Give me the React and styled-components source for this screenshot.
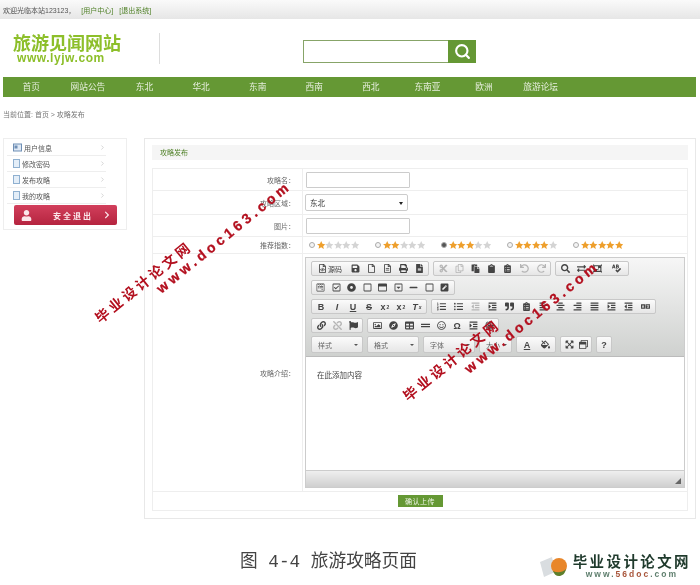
import React from 'react';
import styled, { createGlobalStyle } from 'styled-components';
import {
  FaSave, FaRegFile, FaRegFileAlt, FaPrint, FaFileAlt, FaCut, FaRegCopy, FaPaste, FaClipboard, FaClipboardList,
  FaUndo, FaRedo, FaSearch, FaExchangeAlt, FaObjectGroup, FaSpellCheck, FaWpforms, FaRegCheckSquare, FaDotCircle,
  FaRegWindowMaximize, FaRegCaretSquareDown, FaMinus, FaRegSquare, FaPenSquare, FaListOl, FaListUl, FaOutdent,
  FaIndent, FaQuoteRight, FaAlignLeft, FaAlignCenter, FaAlignRight, FaAlignJustify, FaLink, FaUnlink, FaFlag,
  FaRegImage, FaCompass, FaTable, FaGripLines, FaRegSmile, FaGlobe, FaExpandArrowsAlt, FaRegWindowRestore,
  FaLanguage, FaUser, FaChevronRight, FaRegFileCode, FaFillDrip,
} from 'react-icons/fa';
import { Search, ChevronRight } from 'lucide-react';

const cjk = '"Liberation Sans", "Noto Sans CJK SC", sans-serif';

const GlobalStyle = createGlobalStyle`
  html, body { margin: 0; padding: 0; background: #fff; }
  * { box-sizing: border-box; }
`;

const Page = styled.div`
  position: relative;
  width: 700px;
  height: 585px;
  overflow: hidden;
  font-family: ${cjk};
  font-size: 7px;
  color: #555;
  filter: blur(0.3px);
`;

const TopBar = styled.div`
  height: 19px;
  padding: 0 3px;
  display: flex;
  align-items: center;
  gap: 6px;
  background: linear-gradient(#fafafa, #e6e6e6);
`;

const TopLink = styled.a`
  color: #4d7f24;
`;

const Header = styled.header`
  height: 58px;
  padding: 14px 0 0 13px;
  display: flex;
  align-items: flex-start;
`;

const Logo = styled.div`
  width: 146px;
  height: 31px;
  margin-top: 2px;
  color: #8dbf2a;
  font-weight: 700;
  h1 {
    margin: 0;
    font-size: 18px;
    line-height: 18px;
    color: #8dbf2a;
  }
  span {
    display: block;
    margin-left: 4px;
    font-size: 12px;
    line-height: 10px;
    letter-spacing: 0.55px;
  }
`;

const HeaderDivider = styled.div`
  width: 1px;
  height: 31px;
  background: #ddd;
`;

const SearchBox = styled.div`
  margin: 7px 0 0 143px;
  display: flex;
  height: 23px;
`;

const SearchInput = styled.div`
  width: 145px;
  border: 1px solid #87a468;
  border-right: 0;
`;

const SearchButton = styled.button`
  width: 28px;
  padding: 0;
  border: 0;
  background: #659834;
  color: #fff;
  display: flex;
  align-items: center;
  justify-content: center;
`;

const Nav = styled.nav`
  margin: 0 4px 0 3px;
  height: 20px;
  display: flex;
  background: #659834;
`;

const NavItem = styled.a`
  width: 56.6px;
  text-align: center;
  line-height: 20px;
  font-size: 8.7px;
  color: #e6eedd;
`;

const Breadcrumb = styled.div`
  padding: 13px 3px 0;
  height: 41px;
  color: #777;
  line-height: 9px;
`;

const Content = styled.div`
  display: flex;
  align-items: flex-start;
  gap: 17px;
  padding: 0 4px 0 3px;
`;

const Sidebar = styled.aside`
  width: 124px;
  height: 92px;
  padding: 1px 3px 0;
  border: 1px solid #eee;
`;

const SideRow = styled.div`
  height: 16px;
  width: 99px;
  padding-left: 6px;
  display: flex;
  align-items: center;
  gap: 2px;
  border-bottom: 1px solid #eee;
  color: #555;
  svg:last-child {
    margin-left: auto;
    color: #bbb;
  }
`;

const LogoutButton = styled.button`
  margin: 1px 0 0 7px;
  width: 103px;
  height: 20px;
  padding: 0 6px 0 7px;
  display: flex;
  align-items: center;
  border: 0;
  border-radius: 2px;
  background: linear-gradient(#d23f5c, #b5243f);
  color: #fbe6ea;
  font-family: ${cjk};
  font-size: 8px;
  font-weight: 700;
  letter-spacing: 2px;
  span {
    margin-left: 21px;
  }
  svg:last-child {
    margin-left: auto;
  }
`;

const Main = styled.main`
  width: 552px;
  height: 381px;
  padding: 6px 7px;
  border: 1px solid #e8e8e8;
`;

const PanelTitle = styled.div`
  height: 15px;
  margin-bottom: 8px;
  padding-left: 8px;
  background: #f5f5f5;
  color: #4d7f24;
  line-height: 15px;
`;

const FormTable = styled.div`
  border: 1px solid #eee;
  border-bottom: 0;
`;

const FormRow = styled.div`
  height: ${(p) => p.$height}px;
  display: flex;
  border-bottom: 1px solid #eee;
`;

const Label = styled.div`
  width: 150px;
  padding-right: 7px;
  border-right: 1px solid #eee;
  display: flex;
  align-items: center;
  justify-content: flex-end;
  color: #666;
`;

const Field = styled.div`
  flex: 1;
  padding-left: 3px;
  display: flex;
  align-items: center;
`;

const TextInput = styled.div`
  width: 104px;
  height: 16px;
  border: 1px solid #ccc;
  border-radius: 1px;
`;

const Select = styled.div`
  width: 103px;
  height: 17px;
  margin-left: -1px;
  padding: 0 4px;
  display: flex;
  align-items: center;
  justify-content: space-between;
  border: 1px solid #ccc;
  border-radius: 2px;
  color: #333;
  font-size: 7.5px;
  &::after {
    content: '';
    border: 2px solid transparent;
    border-top: 3px solid #222;
    margin-top: 3px;
  }
`;

const Ratings = styled.div`
  display: flex;
  gap: 6px;
`;

const Rating = styled.div`
  width: 60px;
  display: flex;
  align-items: center;
  padding-left: 3px;
`;

const Radio = styled.span`
  width: 6px;
  height: 6px;
  margin-right: 2px;
  border-radius: 50%;
  border: 1px solid #aaa;
  background: ${(p) => (p.$checked ? '#555' : '#f4f4f4')};
`;

const Editor = styled.div`
  width: 380px;
  height: 231px;
  margin-left: -1px;
  border: 1px solid #ccc;
  display: flex;
  flex-direction: column;
`;

const Toolbar = styled.div`
  height: 99px;
  padding: 3px 4px 0 5px;
  display: flex;
  flex-direction: column;
  gap: 4px;
  border-bottom: 1px solid #bbb;
  background: linear-gradient(#f6f6f6, #cfd1cf);
`;

const ToolRow = styled.div`
  height: 15px;
  display: flex;
  gap: 4px;
`;

const ToolGroup = styled.div`
  display: flex;
  align-items: center;
  padding: 0 1px;
  border: 1px solid #c8c8c8;
  border-radius: 2px;
  background: linear-gradient(#fbfbfb, #e6e6e6);
`;

const ToolButton = styled.span`
  width: ${(p) => p.$width || 16}px;
  flex: none;
  display: flex;
  align-items: center;
  justify-content: center;
  gap: 1px;
  color: ${(p) => (p.$off ? '#b5b5b5' : '#444')};
  font-size: ${(p) => (p.$text ? 9 : 7)}px;
  font-weight: ${(p) => (p.$text ? 700 : 400)};
  font-style: ${(p) => (p.$italic ? 'italic' : 'normal')};
  text-decoration: ${(p) => p.$deco || 'none'};
  sub, sup { font-size: 5px; line-height: 0; }
`;

const ComboRow = styled(ToolRow)`
  height: 17px;
  margin-top: -1px;
`;

const Combo = styled.div`
  width: ${(p) => p.$width}px;
  padding: 0 4px 0 6px;
  display: flex;
  align-items: center;
  justify-content: space-between;
  border: 1px solid #c8c8c8;
  border-radius: 2px;
  background: linear-gradient(#fbfbfb, #e6e6e6);
  color: #666;
  &::after {
    content: '';
    border: 2px solid transparent;
    border-top: 2px solid #555;
    margin-top: 2px;
  }
`;

const EditArea = styled.div`
  flex: 1;
  padding: 12px 11px;
  background: #fff;
  color: #444;
  font-size: 7.5px;
`;

const EditorFooter = styled.div`
  height: 17px;
  position: relative;
  border-top: 1px solid #ccc;
  background: linear-gradient(#efefef, #cfcfcf);
  &::after {
    content: '';
    position: absolute;
    right: 3px;
    bottom: 3px;
    border: 3px solid transparent;
    border-right-color: #666;
    border-bottom-color: #666;
  }
`;

const SubmitRow = styled.div`
  height: 19px;
  display: flex;
  justify-content: center;
  align-items: center;
  border-bottom: 1px solid #eee;
`;

const SubmitButton = styled.button`
  width: 45px;
  height: 12px;
  padding: 0;
  border: 0;
  background: #659834;
  color: #eef5e6;
  font-family: ${cjk};
  font-size: 7px;
  letter-spacing: 0.5px;
`;

const Footer = styled.footer`
  position: absolute;
  left: 0;
  right: 0;
  bottom: 7px;
  height: 28px;
  padding: 0 9px 0 240px;
  display: flex;
  justify-content: space-between;
`;

const Caption = styled.div`
  align-self: flex-start;
  font-family: "Liberation Mono", "Noto Sans CJK SC", monospace;
  font-size: 17.7px;
  line-height: 24px;
  color: #444;
  white-space: pre;
`;

const Brand = styled.div`
  align-self: flex-end;
  display: flex;
  align-items: center;
  gap: 4px;
`;

const BrandText = styled.div`
  text-align: center;
  strong {
    display: block;
    font-size: 14.5px;
    line-height: 15px;
    letter-spacing: 2.4px;
    color: #1f3a2c;
  }
  span {
    display: block;
    font-family: "Liberation Sans", sans-serif;
    font-size: 8.5px;
    line-height: 8px;
    font-weight: 700;
    letter-spacing: 2px;
    color: #5f7f6e;
  }
  em {
    font-style: normal;
    color: #a8553a;
  }
`;

const Watermark = styled.div`
  position: absolute;
  left: ${(p) => p.$x}px;
  top: ${(p) => p.$y}px;
  transform: rotate(-39deg);
  transform-origin: 0 50%;
  white-space: nowrap;
  color: #b3101f;
  font-weight: 700;
  font-size: ${(p) => p.$size}px;
  line-height: 16px;
  letter-spacing: ${(p) => p.$spacing}px;
  -webkit-text-stroke: ${(p) => p.$stroke || 0}px #b3101f;
`;

const navItems = ['首页', '网站公告', '东北', '华北', '东南', '西南', '西北', '东南亚', '欧洲', '旅游论坛'];
const sideItems = ['用户信息', '修改密码', '发布攻略', '我的攻略'];

const toolbars = [
  [
    [
      { icon: FaRegFileCode, label: '源码', width: 34 }, { icon: FaSave }, { icon: FaRegFile }, { icon: FaRegFileAlt },
      { icon: FaPrint }, { icon: FaFileAlt },
    ],
    [
      { icon: FaCut, off: true }, { icon: FaRegCopy, off: true }, { icon: FaPaste }, { icon: FaClipboard },
      { icon: FaClipboardList }, { icon: FaUndo, off: true, width: 18 }, { icon: FaRedo, off: true },
    ],
    [{ icon: FaSearch }, { icon: FaExchangeAlt }, { icon: FaObjectGroup }, { icon: FaSpellCheck, width: 22 }],
  ],
  [
    [
      { icon: FaWpforms, width: 15.5 }, { icon: FaRegCheckSquare, width: 15.5 }, { icon: FaDotCircle, width: 15.5 },
      { icon: FaRegSquare, width: 15.5 }, { icon: FaRegWindowMaximize, width: 15.5 },
      { icon: FaRegCaretSquareDown, width: 15.5 }, { icon: FaMinus, width: 15.5 }, { icon: FaRegSquare, width: 15.5 },
      { icon: FaPenSquare, width: 15.5 },
    ],
  ],
  [
    [
      { text: 'B' }, { text: 'I', italic: true }, { text: 'U', deco: 'underline' }, { text: 'S', deco: 'line-through' },
      { text: 'x', sub: '2' }, { text: 'x', sup: '2' }, { text: 'T', sub: 'x', italic: true },
    ],
    [
      { icon: FaListOl, width: 17 }, { icon: FaListUl, width: 17 }, { icon: FaOutdent, off: true, width: 17 },
      { icon: FaIndent, width: 17 }, { icon: FaQuoteRight, width: 17 }, { icon: FaClipboardList, width: 17 },
      { icon: FaAlignLeft, width: 17 }, { icon: FaAlignCenter, width: 17 }, { icon: FaAlignRight, width: 17 },
      { icon: FaAlignJustify, width: 17 }, { icon: FaIndent, width: 17 }, { icon: FaOutdent, width: 17 },
      { icon: FaLanguage, width: 17 },
    ],
  ],
  [
    [{ icon: FaLink }, { icon: FaUnlink, off: true }, { icon: FaFlag }],
    [
      { icon: FaRegImage }, { icon: FaCompass }, { icon: FaTable }, { icon: FaGripLines }, { icon: FaRegSmile },
      { text: 'Ω' }, { icon: FaIndent }, { icon: FaGlobe },
    ],
  ],
];

const tailGroups = [
  [{ text: 'A', deco: 'underline', width: 18 }, { icon: FaFillDrip, width: 18 }],
  [{ icon: FaExpandArrowsAlt, width: 14 }, { icon: FaRegWindowRestore, width: 14 }],
  [{ text: '?', width: 12 }],
];

function Star({ on }) {
  return (
    <svg width="8.4" height="8" viewBox="0.7 1 22.6 21">
      <path
        d="M12 1l3.400 7.300 7.900 1-5.800 5.400 1.500 7.900L12 17.800 5 21.600l1.500-7.900L.7 9.300l7.900-1z"
        fill={on ? '#ee9f2c' : '#d4d4d4'}
      />
    </svg>
  );
}

function SideIcon({ first }) {
  return (
    <svg width={first ? 9 : 7} height="9" viewBox={first ? '0 0 9 9' : '0 0 7 9'}>
      {first ? (
        <>
          <rect x="0.5" y="1" width="8" height="7" fill="#dfe9f5" stroke="#6f8fb5" />
          <rect x="1.500" y="2.500" width="3" height="3" fill="#6f8fb5" />
        </>
      ) : (
        <rect x="0.5" y="0.5" width="6" height="8" fill="#e4eef8" stroke="#8fb0d0" />
      )}
    </svg>
  );
}

function Tool({ item }) {
  const Icon = item.icon;
  return (
    <ToolButton
      $width={item.width}
      $off={item.off}
      $text={!!item.text}
      $italic={item.italic}
      $deco={item.deco}
    >
      {Icon && <Icon size={9} />}
      {item.label}
      {item.text}
      {item.sub && <sub>{item.sub}</sub>}
      {item.sup && <sup>{item.sup}</sup>}
    </ToolButton>
  );
}

function Group({ items }) {
  return (
    <ToolGroup>
      {items.map((item, i) => (
        <Tool key={i} item={item} />
      ))}
    </ToolGroup>
  );
}

function App() {
  return (
    <Page>
      <GlobalStyle />
      <TopBar>
        <span>欢迎光临本站123123，</span>
        <TopLink>[用户中心]</TopLink>
        <TopLink>[退出系统]</TopLink>
      </TopBar>

      <Header>
        <Logo>
          <h1>旅游见闻网站</h1>
          <span>www.lyjw.com</span>
        </Logo>
        <HeaderDivider />
        <SearchBox>
          <SearchInput />
          <SearchButton>
            <Search size={17} strokeWidth={3} />
          </SearchButton>
        </SearchBox>
      </Header>

      <Nav>
        {navItems.map((n) => (
          <NavItem key={n}>{n}</NavItem>
        ))}
      </Nav>

      <Breadcrumb>当前位置: 首页 &gt; 攻略发布</Breadcrumb>

      <Content>
        <Sidebar>
          {sideItems.map((s, i) => (
            <SideRow key={s}>
              <SideIcon first={i === 0} />
              {s}
              <ChevronRight size={7} />
            </SideRow>
          ))}
          <LogoutButton>
            <FaUser size={11} />
            <span>安全退出</span>
            <FaChevronRight size={8} />
          </LogoutButton>
        </Sidebar>

        <Main>
          <PanelTitle>攻略发布</PanelTitle>
          <FormTable>
            <FormRow $height={22}>
              <Label>攻略名：</Label>
              <Field><TextInput /></Field>
            </FormRow>
            <FormRow $height={24}>
              <Label>攻略区域：</Label>
              <Field><Select>东北</Select></Field>
            </FormRow>
            <FormRow $height={22}>
              <Label>图片：</Label>
              <Field><TextInput /></Field>
            </FormRow>
            <FormRow $height={17}>
              <Label>推荐指数：</Label>
              <Field>
                <Ratings>
                  {[1, 2, 3, 4, 5].map((r) => (
                    <Rating key={r}>
                      <Radio $checked={r === 3} />
                      {[1, 2, 3, 4, 5].map((s) => (
                        <Star key={s} on={s <= r} />
                      ))}
                    </Rating>
                  ))}
                </Ratings>
              </Field>
            </FormRow>
            <FormRow $height={238}>
              <Label>攻略介绍：</Label>
              <Field>
                <Editor>
                  <Toolbar>
                    {toolbars.map((row, i) => (
                      <ToolRow key={i}>
                        {row.map((items, j) => (
                          <Group key={j} items={items} />
                        ))}
                      </ToolRow>
                    ))}
                    <ComboRow>
                      <Combo $width={52}>样式</Combo>
                      <Combo $width={52}>格式</Combo>
                      <Combo $width={52}>字体</Combo>
                      <Combo $width={33}>大小</Combo>
                      {tailGroups.map((items, i) => (
                        <Group key={i} items={items} />
                      ))}
                    </ComboRow>
                  </Toolbar>
                  <EditArea>在此添加内容</EditArea>
                  <EditorFooter />
                </Editor>
              </Field>
            </FormRow>
            <SubmitRow>
              <SubmitButton>确认上传</SubmitButton>
            </SubmitRow>
          </FormTable>
        </Main>
      </Content>

      <Footer>
        <Caption>图 4-4 旅游攻略页面</Caption>
        <Brand>
          <svg width="30" height="24" viewBox="0 0 30 24">
            <path d="M1 8l12-5 3 15-11 5z" fill="#d9dde0" />
            <circle cx="20" cy="12" r="8" fill="#e8862a" />
            <path d="M14 17c4 2 9 2 13-2-1 5-4 7-7 7s-5-2-6-5z" fill="#5d7f2c" />
          </svg>
          <BrandText>
            <strong>毕业设计论文网</strong>
            <span>www.<em>56doc</em>.com</span>
          </BrandText>
        </Brand>
      </Footer>

      <Watermark $x={97} $y={312} $size={14} $spacing={3.2}>毕业设计论文网</Watermark>
      <Watermark $x={158} $y={282} $size={14} $spacing={3.7} $stroke={0.3}>www.doc163.com</Watermark>
      <Watermark $x={405} $y={390} $size={14} $spacing={3.2}>毕业设计论文网</Watermark>
      <Watermark $x={466} $y={362} $size={14} $spacing={3.7} $stroke={0.3}>www.doc163.com</Watermark>
    </Page>
  );
}

export default App;
